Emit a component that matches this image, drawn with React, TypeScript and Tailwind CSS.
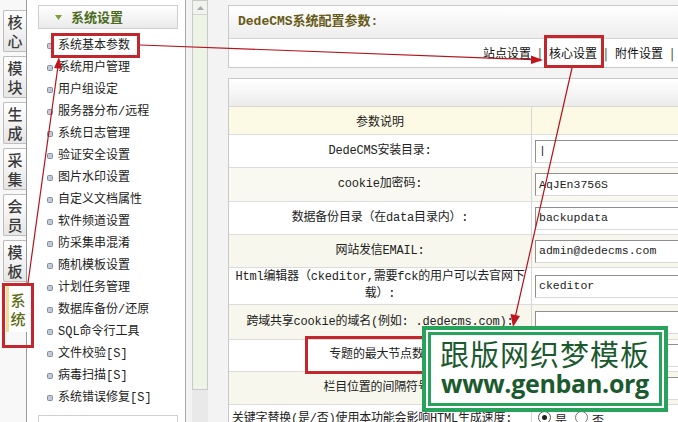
import React from "react";

const CJK = "font-['Noto_Sans_CJK_SC','Noto_Sans',sans-serif]";
const MONO = "font-['Liberation_Mono','Noto_Sans_CJK_SC',monospace]";

const tabs = [
  ["核", "心"],
  ["模", "块"],
  ["生", "成"],
  ["采", "集"],
  ["会", "员"],
  ["模", "板"],
];

const menu = [
  "系统基本参数",
  "系统用户管理",
  "用户组设定",
  "服务器分布/远程",
  "系统日志管理",
  "验证安全设置",
  "图片水印设置",
  "自定义文档属性",
  "软件频道设置",
  "防采集串混淆",
  "随机模板设置",
  "计划任务管理",
  "数据库备份/还原",
  "SQL命令行工具",
  "文件校验[S]",
  "病毒扫描[S]",
  "系统错误修复[S]",
];

type Row = { label: React.ReactNode; value?: string; h: string; bg: string; input?: boolean };

const rows: Row[] = [
  { label: "DedeCMS安装目录:", value: "|", h: "h-[33px]", bg: "bg-white", input: true },
  { label: "cookie加密码:", value: "AqJEn3756S", h: "h-[34px]", bg: "bg-[#f9f9f1]", input: true },
  { label: "数据备份目录（在data目录内）:", value: "backupdata", h: "h-[33px]", bg: "bg-white", input: true },
  { label: "网站发信EMAIL:", value: "admin@dedecms.com", h: "h-[33px]", bg: "bg-[#f7f7ed]", input: true },
  {
    label: (
      <>
        Html编辑器（ckeditor,需要fck的用户可以去官网下
        <br />
        载）:
      </>
    ),
    value: "ckeditor",
    h: "h-[37px]",
    bg: "bg-white",
    input: true,
  },
  { label: "跨域共享cookie的域名(例如: .dedecms.com):", value: "", h: "h-[35px]", bg: "bg-[#f7f7ed]", input: true },
  { label: "专题的最大节点数:", value: "", h: "h-[32px]", bg: "bg-white", input: true },
  { label: "栏目位置的间隔符号:", value: "", h: "h-[33px]", bg: "bg-[#f7f7ed]", input: true },
];

export default function App() {
  return (
    <div className={`relative w-[678px] h-[422px] overflow-hidden flex bg-[#f4f4f4] text-[#222] ${CJK}`}>
      {/* left tab column */}
      <aside className="w-[27px] shrink-0 bg-[#f8f8f8] border-r border-[#9a9a9a] pt-[10px] flex flex-col gap-[4px]">
        {tabs.map((t, i) => (
          <div
            key={i}
            className="ml-[3px] w-[23px] h-[42px] border border-r-0 border-[#bdbdbd] rounded-l-[2px] bg-linear-to-b from-white to-[#e6e6e6] flex flex-col items-center justify-center text-[15px] leading-[19px] font-medium text-[#3a3a3a]"
          >
            <span>{t[0]}</span>
            <span>{t[1]}</span>
          </div>
        ))}
        <div className="ml-[6px] w-[21px] h-[46px] bg-white border-l-[3px] border-[#f1dc9c] flex flex-col items-center justify-center text-[15px] leading-[19px] font-medium text-[#5d6b14]">
          <span>系</span>
          <span>统</span>
        </div>
      </aside>

      {/* sidebar menu */}
      <nav className="w-[159px] shrink-0 bg-white border-r border-[#a9a9a9] pt-[5px] flex flex-col">
        <div className="ml-[11px] w-[140px] h-[24px] border border-[#cfcfcf] bg-linear-to-b from-white to-[#eaeaea] flex items-center pl-[16px] gap-[9px]">
          <svg width="7" height="5" viewBox="0 0 7 5">
            <polygon points="0,0 7,0 3.5,5" fill="#7aa13a" />
          </svg>
          <span className="text-[13px] font-bold text-[#4b6b1c]">系统设置</span>
        </div>
        <ul className="mt-[6px] flex flex-col">
          {menu.map((m) => (
            <li key={m} className="h-[22px] flex items-center pl-[20px]">
              <span className="w-[6px] h-[6px] rounded-[1.5px] bg-[#c3cbd9] border border-[#7f8ca3]" />
              <span className={`ml-[5px] text-[12px] whitespace-nowrap ${MONO}`}>{m}</span>
            </li>
          ))}
        </ul>
        <div className="mt-auto ml-[11px] w-[140px] h-[7px] border border-b-0 border-[#cfcfcf]" />
      </nav>

      {/* scroll column */}
      <div className="w-[42px] shrink-0 bg-[#f3f3f3] pl-[6px] flex flex-col">
        <div className="w-[16px] h-[390px] border border-[#c9c9c9] bg-[#edf4e6] flex flex-col">
          <div className="h-[14px] border-b border-[#d2d2d2] bg-[#f1f4ee] flex items-center justify-center">
            <svg width="7" height="4" viewBox="0 0 7 4">
              <polygon points="0,4 7,4 3.5,0" fill="#a9a9a9" />
            </svg>
          </div>
        </div>
        <div className="w-[16px] flex-1 bg-[#e9e9e9]" />
      </div>

      {/* main */}
      <main className="w-[460px] shrink-0 pt-[5px] flex flex-col gap-[10px]">
        <section className="border border-[#c9c9c9] bg-white">
          <div className="h-[33px] border-b border-[#d4d4d4] bg-linear-to-b from-white to-[#ededed] flex items-center pl-[9px]">
            <span className={`text-[13px] font-bold text-[#675a17] ${MONO}`}>DedeCMS系统配置参数:</span>
          </div>
          <div className="h-[28px] flex items-center justify-end pr-[13px] gap-[7px] text-[12px] text-[#111]">
            <span>站点设置</span>
            <span className="w-[4px] text-center">|</span>
            <span>核心设置</span>
            <span className="w-[4px] text-center">|</span>
            <span>附件设置</span>
            <span className="w-[4px] text-center">|</span>
          </div>
        </section>

        <section className="border border-[#c9c9c9] bg-white flex flex-col text-[12px]">
          <div className="h-[28px] border-b border-[#d8d8d8] bg-linear-to-b from-white to-[#ececec]" />
          <div className="h-[28px] flex border-b border-[#dcdcdc] bg-[#fcfae4]">
            <div className="w-[303px] shrink-0 border-r border-[#d6d6d6] flex items-center justify-center">参数说明</div>
            <div className="flex-1" />
          </div>
          {rows.map((r, i) => (
            <div key={i} className={`${r.h} flex border-b border-[#dcdcdc] ${r.bg}`}>
              <div className={`w-[303px] shrink-0 border-r border-[#d6d6d6] flex items-center justify-center text-center leading-[17px] whitespace-nowrap tracking-[-0.2px] ${MONO}`}>
                <span>{r.label}</span>
              </div>
              <div className="flex-1 flex items-center pl-[3px]">
                {r.input && (
                  <div className={`w-[160px] h-[23px] bg-white border border-[#8f8f8f] border-r-[#d9d9d9] border-b-[#d9d9d9] flex items-center pl-[3px] text-[11.5px] ${MONO}`}>
                    {r.value}
                  </div>
                )}
              </div>
            </div>
          ))}
          <div className="h-[30px] flex bg-white">
            <div className={`w-[303px] shrink-0 border-r border-[#d6d6d6] flex items-start pt-[5px] pl-[3px] whitespace-nowrap tracking-[-0.2px] ${MONO}`}>
              关键字替换(是/否)使用本功能会影响HTML生成速度:
            </div>
            <div className="flex-1 flex items-start pt-[6px] pl-[6px] gap-[4px]">
              <span className="w-[13px] h-[13px] rounded-full border border-[#555] bg-white flex items-center justify-center">
                <span className="w-[5px] h-[5px] rounded-full bg-[#222]" />
              </span>
              <span>是</span>
              <span className="ml-[4px] w-[13px] h-[13px] rounded-full border border-[#777] bg-white" />
              <span>否</span>
            </div>
          </div>
        </section>
      </main>

      {/* annotation overlay: red boxes */}
      <div className="absolute left-[51px] top-[33px] w-[89px] h-[25px] border-[3px] border-[#c1272d]" />
      <div className="absolute left-[544px] top-[35px] w-[60px] h-[33px] border-[3px] border-[#c1272d]" />
      <div className="absolute left-[2px] top-[283px] w-[32px] h-[65px] border-[3px] border-[#c1272d]" />
      <div className="absolute left-[305px] top-[336px] w-[130px] h-[38px] border-[3px] border-[#c1272d]" />

      {/* annotation overlay: arrows */}
      <svg className="absolute left-0 top-0 pointer-events-none" width="678" height="422" viewBox="0 0 678 422">
        <g stroke="#b3141c" strokeWidth="1.2" fill="none">
          <line x1="28" y1="283" x2="58" y2="66" />
          <line x1="140" y1="45" x2="532" y2="59.6" />
          <line x1="572" y1="68" x2="515" y2="318" />
        </g>
        <g fill="#c1141c">
          <polygon points="59,57 62,69 54,68" />
          <polygon points="543,60 531,55.5 531,64" />
          <polygon points="513,327 520,316 510.5,314" />
        </g>
      </svg>

      {/* watermark */}
      <div className="absolute left-[422px] top-[326px] w-[246px] h-[86px] bg-[#28a35b] p-[4px]">
        <div className="w-full h-full bg-white p-[2px]">
          <div className="w-full h-full bg-[#28a35b] p-[3px]">
            <div className="w-full h-full bg-white flex flex-col items-center text-[#1b5a2e]">
              <div className="pt-[2px] text-[29px] leading-[33px] tracking-[1px]">跟版网织梦模板</div>
              <div className="text-[25px] leading-[26px] font-bold font-['Open_Sans',sans-serif] tracking-[-0.3px]">
                www.genban.org
              </div>
            </div>
          </div>
        </div>
      </div>
    </div>
  );
}
